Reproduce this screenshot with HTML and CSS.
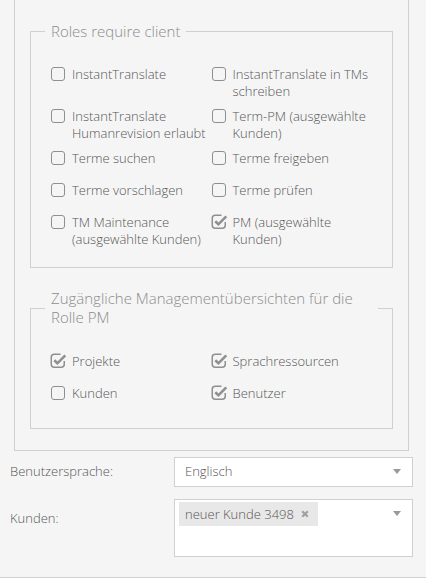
FILE: index.html
```html
<!DOCTYPE html>
<html lang="de">
<head>
<meta charset="utf-8">
<link rel="stylesheet" href="styles.css">
</head>
<body>
<div class="panel">
  <fieldset class="group">
    <legend>Roles require client</legend>
    <div class="grid">
      <label class="cb"><span class="box"></span><span class="txt">InstantTranslate</span></label>
      <label class="cb"><span class="box"></span><span class="txt">InstantTranslate in TMs schreiben</span></label>
      <label class="cb"><span class="box"></span><span class="txt">InstantTranslate Humanrevision erlaubt</span></label>
      <label class="cb"><span class="box"></span><span class="txt">Term-PM (ausgewählte Kunden)</span></label>
      <label class="cb"><span class="box"></span><span class="txt">Terme suchen</span></label>
      <label class="cb"><span class="box"></span><span class="txt">Terme freigeben</span></label>
      <label class="cb"><span class="box"></span><span class="txt">Terme vorschlagen</span></label>
      <label class="cb"><span class="box"></span><span class="txt">Terme prüfen</span></label>
      <label class="cb"><span class="box"></span><span class="txt">TM Maintenance (ausgewählte Kunden)</span></label>
      <label class="cb"><span class="box checked"><svg viewBox="0 0 17 16" width="17" height="16"><path d="M10.5 1.25H4.25A3 3 0 0 0 1.25 4.25V11.25A3 3 0 0 0 4.25 14.25H11.25A3 3 0 0 0 14.25 11.25V8" fill="none" stroke="#8f8f8f" stroke-width="1.5"/><path d="M4.3 7.3L7.4 10.3L15.3 2.4" fill="none" stroke="#8f8f8f" stroke-width="2.6"/></svg></span><span class="txt">PM (ausgewählte Kunden)</span></label>
    </div>
  </fieldset>
  <fieldset class="group group-second">
    <legend>Zugängliche Managementübersichten für die Rolle PM</legend>
    <div class="grid">
      <label class="cb"><span class="box checked"><svg viewBox="0 0 17 16" width="17" height="16"><path d="M10.5 1.25H4.25A3 3 0 0 0 1.25 4.25V11.25A3 3 0 0 0 4.25 14.25H11.25A3 3 0 0 0 14.25 11.25V8" fill="none" stroke="#8f8f8f" stroke-width="1.5"/><path d="M4.3 7.3L7.4 10.3L15.3 2.4" fill="none" stroke="#8f8f8f" stroke-width="2.6"/></svg></span><span class="txt">Projekte</span></label>
      <label class="cb"><span class="box checked"><svg viewBox="0 0 17 16" width="17" height="16"><path d="M10.5 1.25H4.25A3 3 0 0 0 1.25 4.25V11.25A3 3 0 0 0 4.25 14.25H11.25A3 3 0 0 0 14.25 11.25V8" fill="none" stroke="#8f8f8f" stroke-width="1.5"/><path d="M4.3 7.3L7.4 10.3L15.3 2.4" fill="none" stroke="#8f8f8f" stroke-width="2.6"/></svg></span><span class="txt">Sprachressourcen</span></label>
      <label class="cb"><span class="box"></span><span class="txt">Kunden</span></label>
      <label class="cb"><span class="box checked"><svg viewBox="0 0 17 16" width="17" height="16"><path d="M10.5 1.25H4.25A3 3 0 0 0 1.25 4.25V11.25A3 3 0 0 0 4.25 14.25H11.25A3 3 0 0 0 14.25 11.25V8" fill="none" stroke="#8f8f8f" stroke-width="1.5"/><path d="M4.3 7.3L7.4 10.3L15.3 2.4" fill="none" stroke="#8f8f8f" stroke-width="2.6"/></svg></span><span class="txt">Benutzer</span></label>
    </div>
  </fieldset>
</div>
<div class="form">
  <div class="row row-center">
    <span class="lbl">Benutzersprache:</span>
    <div class="field select">
      <span class="value">Englisch</span>
      <span class="arrow"></span>
    </div>
  </div>
  <div class="row">
    <span class="lbl lbl-top">Kunden:</span>
    <div class="field tags">
      <span class="tag">neuer Kunde 3498<svg class="x" viewBox="0 0 8 8" width="8" height="8"><path d="M1.2 1.2L6.8 6.8M6.8 1.2L1.2 6.8" stroke="#a0a0a0" stroke-width="2.2"/></svg></span>
      <span class="arrow arrow-top"></span>
    </div>
  </div>
</div>
<div class="foot"></div>
</body>
</html>
```
FILE: styles.css
```css
html, body {
  margin: 0;
  padding: 0;
}
body {
  background: #f5f5f5;
  font-family: "Open Sans", "DejaVu Sans", sans-serif;
  font-size: 13px;
  font-weight: 300;
  color: #555;
  width: 426px;
  height: 580px;
  overflow: hidden;
}
.panel {
  margin: 0 17px 0 14px;
  border: 1px solid #d0d0d0;
  border-top: none;
  padding: 22px 15px 21px 15px;
}
.group {
  margin: 0;
  border: 1px solid #d0d0d0;
  padding: 24px 20px 19px 20px;
  min-width: 0;
}
.group + .group {
  margin-top: 21px;
}
.group-second {
  padding-top: 25px;
}
.group legend {
  margin: 0 -6px;
  padding: 0 6px;
  font-size: 15px;
  line-height: 19.5px;
  color: #8c8c8c;
}
.grid {
  display: grid;
  grid-template-columns: 1fr 1fr;
  row-gap: 8px;
}
.cb {
  display: flex;
  align-items: flex-start;
  gap: 7px;
  min-height: 24px;
  line-height: 17px;
}
.box {
  flex: none;
  width: 14px;
  height: 14px;
  margin-top: 1px;
  box-sizing: border-box;
  border: 1.5px solid #8f8f8f;
  border-radius: 3px;
  position: relative;
}
.box.checked {
  border: none;
}
.box.checked svg {
  position: absolute;
  left: -1px;
  top: -1px;
}
.form {
  margin: 6px 13px 0 10px;
  display: flex;
  flex-direction: column;
  gap: 12px;
}
.row {
  display: flex;
  align-items: flex-start;
}
.row-center {
  align-items: center;
}
.lbl {
  width: 164px;
  flex: none;
  line-height: 17px;
}
.lbl-top {
  padding-top: 11px;
}
.field {
  flex: 1;
  background: #fff;
  border: 1px solid #d0d0d0;
  box-sizing: border-box;
  display: flex;
  align-items: center;
  justify-content: space-between;
}
.select {
  height: 30px;
  padding: 0 11px 0 10px;
}
.value {
  line-height: 17px;
}
.tags {
  height: 58px;
  align-items: flex-start;
  padding: 2px 11px 0 4px;
}
.tag {
  background: #e8e8e8;
  height: 24px;
  line-height: 24px;
  padding: 0 9px 0 6px;
  display: flex;
  align-items: center;
  gap: 7px;
}
.arrow {
  width: 0;
  height: 0;
  border-left: 4.5px solid transparent;
  border-right: 4.5px solid transparent;
  border-top: 5px solid #999;
}
.arrow-top {
  margin-top: 9px;
}
.foot {
  margin-top: 20px;
  border-top: 1px solid #d0d0d0;
  background: #fff;
  height: 10px;
}
```
